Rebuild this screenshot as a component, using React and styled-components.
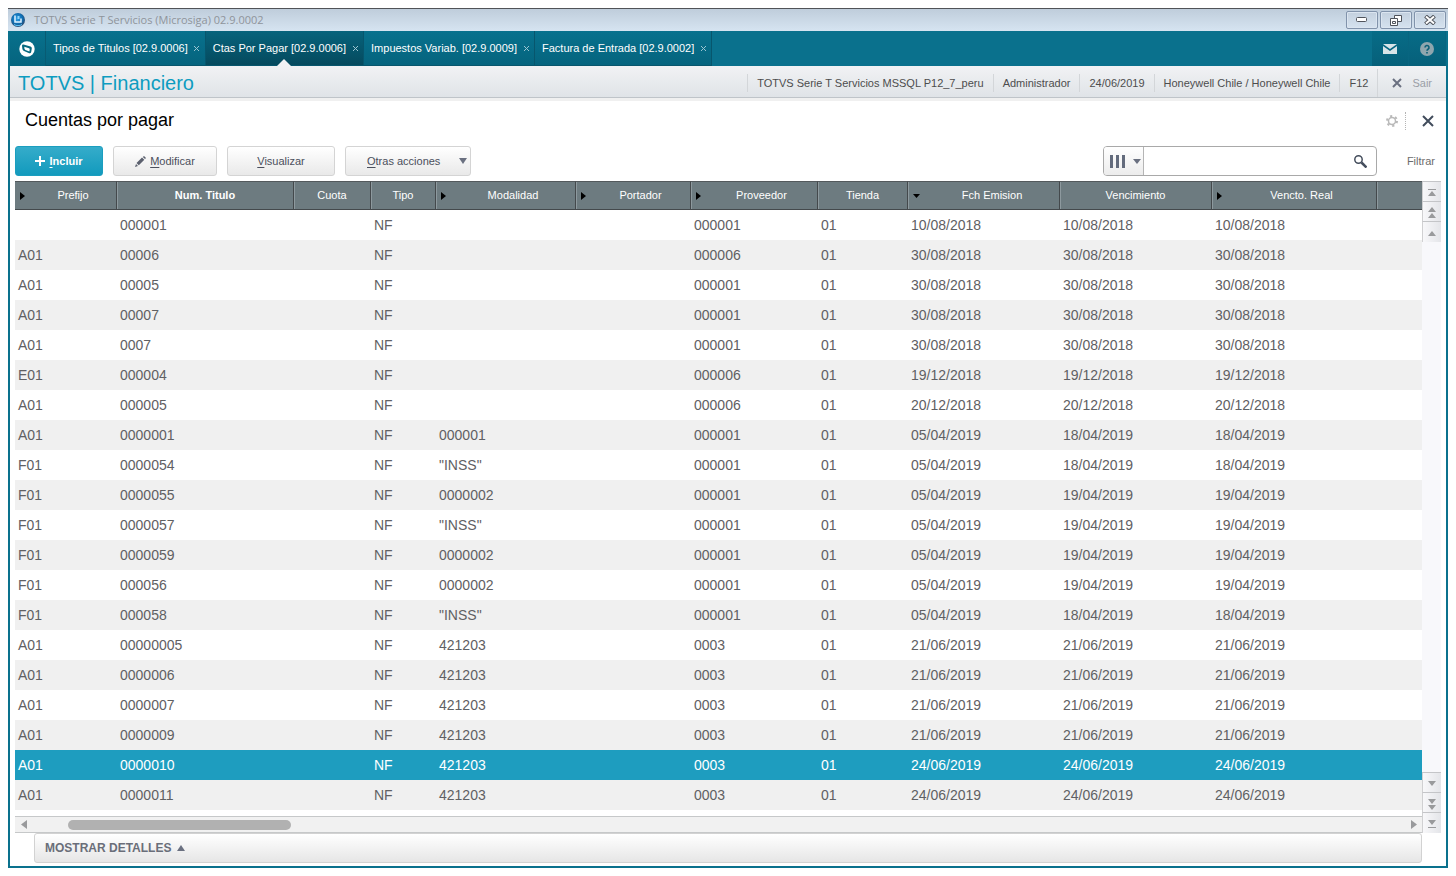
import React from 'react';
import styled, { createGlobalStyle, css } from 'styled-components';

const Global = createGlobalStyle`
  *, *::before, *::after { box-sizing: border-box; }
  body {
    margin: 8px;
    background: #fff;
    font-family: "Liberation Sans", Arial, sans-serif;
    font-size: 11px;
    color: #4d4d4d;
  }
  button, input { font: inherit; color: inherit; margin: 0; padding: 0; }
  button { cursor: pointer; background: none; border: 0; }
  svg { display: block; flex: none; }
`;

const TEAL = '#0a718d';

const Window = styled.div`
  display: flex;
  flex-direction: column;
`;

const TitleBar = styled.header`
  display: flex;
  align-items: center;
  height: 23px;
  padding: 0 2px;
  gap: 8px;
  border-top: 1px solid #505358;
  background: linear-gradient(#bfcddb, #d6e4f1);
`;

const WindowTitle = styled.span`
  flex: 1;
  font-family: "Open Sans", "Noto Sans", sans-serif;
  font-size: 11px;
  line-height: 16px;
  color: #8f949b;
`;

const WindowButtons = styled.div`
  display: flex;
  gap: 2px;
`;

const WindowButton = styled.button`
  display: flex;
  align-items: center;
  justify-content: center;
  width: 32px;
  height: 18px;
  border: 1px solid #8193ab;
  border-radius: 2px;
  background: linear-gradient(#c3d0de, #d5e2ef);
  box-shadow: inset 0 0 0 1px #dbe5f0;
`;

const Frame = styled.div`
  border: solid ${TEAL};
  border-width: 0 2px 2px;
`;

const TabBar = styled.nav`
  display: flex;
  height: 35px;
  background: ${TEAL};
`;

const HomeButton = styled.button`
  display: flex;
  align-items: center;
  justify-content: center;
  width: 36px;
  padding-right: 1px;
  border-right: 1px solid #085b73;
  background: linear-gradient(#08718d, #05647e);
`;

const Tab = styled.div`
  position: relative;
  display: flex;
  align-items: center;
  gap: 5px;
  padding: 0 4px 0 7px;
  border-right: 1px solid #07566d;
  border-bottom: 1px solid #07566d;
  background: linear-gradient(#08718d, #05647e);
  ${(p) => p.$active && css`
    background: linear-gradient(#07637c, #054a5e);
    &::after {
      content: '';
      position: absolute;
      left: 50%;
      bottom: -1px;
      margin-left: -7px;
      border: 7px solid transparent;
      border-top: 0;
      border-bottom-color: #f1f2f4;
    }
  `}
`;

const TabLabel = styled.button`
  height: 34px;
  color: #fff;
  white-space: nowrap;
`;

const TabClose = styled.button`
  display: flex;
  align-items: center;
  height: 34px;
  width: 8px;
  justify-content: center;
`;

const TabIcons = styled.div`
  display: flex;
  margin-left: auto;
`;

const TabIcon = styled.button`
  display: flex;
  align-items: center;
  justify-content: center;
  width: 37px;
  border-right: 1px solid #086580;
  background: linear-gradient(#076c87, #06607a);
`;

const InfoBar = styled.div`
  display: flex;
  align-items: center;
  height: 35px;
  padding-top: 2px;
  border-bottom: 3px solid #f0f0f0;
  background: linear-gradient(#f1f2f4, #dfe3e7);
  box-shadow: inset 0 -1px #bfc4c9;
`;

const Brand = styled.h1`
  flex: 1;
  margin: 0;
  padding-left: 8px;
  font-size: 20px;
  line-height: 24px;
  font-weight: normal;
  color: #0d9cc0;
`;

const InfoItem = styled.span`
  padding: 0 9px;
  border-left: 1px solid #d3d6d9;
  line-height: 18px;
  white-space: nowrap;
`;

const ExitButton = styled.button`
  display: flex;
  align-items: center;
  gap: 10px;
  height: 28px;
  padding: 0 14px;
  border-left: 1px solid #d3d6d9;
  color: #9a9ea6;
`;

const Content = styled.main`
  padding: 0 5px 3px;
`;

const PageHead = styled.div`
  display: flex;
  align-items: center;
  height: 45px;
  padding: 0 7px 6px 10px;
`;

const PageTitle = styled.h2`
  flex: 1;
  margin: 0;
  padding-bottom: 2px;
  font-size: 18px;
  line-height: 24px;
  font-weight: normal;
  color: #000;
`;

const GearButton = styled.button`
  height: 18px;
  padding-right: 7px;
  border-right: 1px dotted #b5b5b5;
`;

const CloseButton = styled.button`
  display: flex;
  align-items: center;
  height: 18px;
  padding-left: 16px;
`;

const Toolbar = styled.div`
  display: flex;
  align-items: center;
  gap: 10px;
  padding-bottom: 5px;
`;

const ActionButton = styled.button`
  display: flex;
  align-items: center;
  justify-content: ${(p) => (p.$menu ? 'space-between' : 'center')};
  gap: 4px;
  width: ${(p) => p.$width}px;
  height: 30px;
  padding: ${(p) => (p.$menu ? '0 3px 0 21px' : '0')};
  border: 1px solid #d4d4d4;
  border-radius: 3px;
  background: linear-gradient(#fff, #e9e9e9);
  color: #4b4f5c;
  ${(p) => p.$primary && css`
    border-color: #1b9ebf;
    background: linear-gradient(#35acca, #129abd);
    color: #fff;
    font-weight: bold;
  `}
  u { text-underline-offset: 2px; }
`;

const SearchBox = styled.form`
  display: flex;
  width: 274px;
  height: 30px;
  margin-left: auto;
  border: 1px solid #a9a9a9;
  border-radius: 4px;
  overflow: hidden;
`;

const ColumnPicker = styled.button`
  display: flex;
  align-items: center;
  gap: 7px;
  padding: 0 2px 0 6px;
  border-right: 1px solid #b5b5b5;
  background: linear-gradient(#fff, #ececec);
`;

const SearchInput = styled.input`
  flex: 1;
  min-width: 0;
  padding: 0 6px;
  border: 0;
  outline: 0;
`;

const SearchButton = styled.button`
  width: 30px;
  padding-left: 8px;
`;

const FilterButton = styled.button`
  padding: 0 6px 0 20px;
  color: #6c6c6c;
`;

const GridArea = styled.section`
  display: flex;
  height: 652px;
`;

const GridMain = styled.div`
  flex: 1;
  min-width: 0;
  display: flex;
  flex-direction: column;
  justify-content: space-between;
`;

const Table = styled.table`
  width: 100%;
  table-layout: fixed;
  border-collapse: separate;
  border-spacing: 0;
`;

const HeadCell = styled.th`
  height: 29px;
  padding: 0 0 2px;
  border-top: 1px solid #53595c;
  border-right: 1px solid #44494c;
  border-bottom: 1px solid #44494c;
  background: #6d7b80;
  box-shadow: inset 1px 0 #8d999e;
  color: #fff;
  font-weight: ${(p) => (p.$bold ? 'bold' : 'normal')};
  &:first-child { box-shadow: none; }
  &:last-child { border-right: 0; }
`;

const HeadLabel = styled.div`
  display: flex;
  align-items: center;
  padding-left: ${(p) => (p.$marked ? 5 : 0)}px;
  svg { margin: 2px 5px 0 0; }
  span { flex: 1; text-align: center; }
`;

const Row = styled.tr`
  background: #fff;
  color: #5f6063;
  &:nth-child(even) { background: #f0f0f0; }
  ${(p) => p.$selected && css`
    &&& { background: #1e9dbf; color: #fff; }
  `}
`;

const Cell = styled.td`
  height: 30px;
  padding: 0 3px;
  font-size: 14px;
  line-height: 18px;
  white-space: nowrap;
`;

const HScroll = styled.div`
  display: flex;
  align-items: center;
  height: 17px;
  border-top: 1px solid #c6c8c9;
  border-bottom: 1px solid #c6c8c9;
  background: #f1f1f1;
`;

const HArrow = styled.button`
  display: flex;
  align-items: center;
  justify-content: center;
  width: 17px;
  height: 15px;
`;

const HTrack = styled.div`
  flex: 1;
  padding-left: 36px;
`;

const HThumb = styled.div`
  width: 223px;
  height: 10px;
  border-radius: 5px;
  background: #b1b1b1;
`;

const VScroll = styled.div`
  display: flex;
  flex-direction: column;
  justify-content: space-between;
  width: 19px;
  background: #f8f8fb;
`;

const VButtons = styled.div`
  border-top: 1px solid #c4c5c8;
`;

const VButton = styled.button`
  display: flex;
  align-items: center;
  justify-content: center;
  width: 19px;
  height: 20px;
  padding-top: 2px;
  border-left: 1px solid #d0d0d2;
  border-bottom: 1px solid #c4c5c8;
  background: linear-gradient(90deg, #f8f8fa, #e4e5e9);
  &:last-child { border-bottom: 0; }
`;

const Details = styled.button`
  display: flex;
  align-items: center;
  gap: 6px;
  width: calc(100% - 38px);
  height: 30px;
  margin-left: 19px;
  padding: 0 10px;
  border: 1px solid #d2d2d2;
  border-radius: 3px;
  background: linear-gradient(#fff, #e6e6e6);
  font-size: 12px;
  font-weight: bold;
  color: #6a6e79;
`;

const Triangle = ({ dir = 'down', w = 8, h = 5, color = '#6a7080' }) => {
  const pts = {
    down: `0,0 ${w},0 ${w / 2},${h}`,
    up: `0,${h} ${w},${h} ${w / 2},0`,
    right: `0,0 ${w},${h / 2} 0,${h}`,
    left: `${w},0 0,${h / 2} ${w},${h}`,
  }[dir];
  return (
    <svg width={w} height={h} viewBox={`0 0 ${w} ${h}`}>
      <polygon points={pts} fill={color} />
    </svg>
  );
};

const Cross = ({ size, stroke, color }) => (
  <svg width={size} height={size} viewBox={`0 0 ${size} ${size}`}>
    <path d={`M1 1L${size - 1} ${size - 1}M${size - 1} 1L1 ${size - 1}`} stroke={color} strokeWidth={stroke} />
  </svg>
);

const GREY = '#999a9c';
const ScrollGlyph = ({ kind }) => (
  <svg width="9" height="12" viewBox="0 0 9 12" fill={GREY}>
    {kind === 'first' && <path d="M0 2h8v1H0zM0 9h8L4 4z" />}
    {kind === 'pageUp' && <path d="M0 5h8L4 0zM0 11h8L4 6z" />}
    {kind === 'up' && <path d="M0 9h8L4 4z" />}
    {kind === 'down' && <path d="M0 3h8L4 8z" />}
    {kind === 'pageDown' && <path d="M0 1h8L4 6zM0 7h8L4 12z" />}
    {kind === 'last' && <path d="M0 2h8L4 7zM0 9h8v1H0z" />}
  </svg>
);

const AppLogo = () => (
  <svg width="16" height="16" viewBox="0 0 16 16">
    <defs>
      <radialGradient id="ball" cx="45%" cy="40%" r="60%">
        <stop offset="0" stopColor="#2f9fe4" />
        <stop offset="0.6" stopColor="#0f6fb4" />
        <stop offset="1" stopColor="#2c4a70" />
      </radialGradient>
    </defs>
    <circle cx="8" cy="8" r="7" fill="url(#ball)" />
    <path d="M5 3.500v6.500h6V6.500" fill="none" stroke="#dff2ff" strokeWidth="1.500" />
    <path d="M7.500 4h2v3h-2z" fill="#8fd4fa" />
    <path d="M4 12.500c2.500 1.500 5.500 1.500 8 0" fill="none" stroke="#5cc3f5" />
  </svg>
);

const columns = [
  { label: 'Prefijo', width: 102, mark: 'right' },
  { label: 'Num. Titulo', width: 177, bold: true },
  { label: 'Cuota', width: 77 },
  { label: 'Tipo', width: 65 },
  { label: 'Modalidad', width: 140, mark: 'right' },
  { label: 'Portador', width: 115, mark: 'right' },
  { label: 'Proveedor', width: 127, mark: 'right' },
  { label: 'Tienda', width: 90 },
  { label: 'Fch Emision', width: 152, mark: 'down' },
  { label: 'Vencimiento', width: 152 },
  { label: 'Vencto. Real', width: 165, mark: 'right' },
  { label: '' },
];

const titles = [
  ['', '000001', '', '000001', '10/08/2018', '10/08/2018'],
  ['A01', '00006', '', '000006', '30/08/2018', '30/08/2018'],
  ['A01', '00005', '', '000001', '30/08/2018', '30/08/2018'],
  ['A01', '00007', '', '000001', '30/08/2018', '30/08/2018'],
  ['A01', '0007', '', '000001', '30/08/2018', '30/08/2018'],
  ['E01', '000004', '', '000006', '19/12/2018', '19/12/2018'],
  ['A01', '000005', '', '000006', '20/12/2018', '20/12/2018'],
  ['A01', '0000001', '000001', '000001', '05/04/2019', '18/04/2019'],
  ['F01', '0000054', '"INSS"', '000001', '05/04/2019', '18/04/2019'],
  ['F01', '0000055', '0000002', '000001', '05/04/2019', '19/04/2019'],
  ['F01', '0000057', '"INSS"', '000001', '05/04/2019', '19/04/2019'],
  ['F01', '0000059', '0000002', '000001', '05/04/2019', '19/04/2019'],
  ['F01', '000056', '0000002', '000001', '05/04/2019', '19/04/2019'],
  ['F01', '000058', '"INSS"', '000001', '05/04/2019', '18/04/2019'],
  ['A01', '00000005', '421203', '0003', '21/06/2019', '21/06/2019'],
  ['A01', '0000006', '421203', '0003', '21/06/2019', '21/06/2019'],
  ['A01', '0000007', '421203', '0003', '21/06/2019', '21/06/2019'],
  ['A01', '0000009', '421203', '0003', '21/06/2019', '21/06/2019'],
  ['A01', '0000010', '421203', '0003', '24/06/2019', '24/06/2019'],
  ['A01', '0000011', '421203', '0003', '24/06/2019', '24/06/2019'],
];

const selectedTitle = '0000010';

const tabs = [
  'Tipos de Titulos [02.9.0006]',
  'Ctas Por Pagar [02.9.0006]',
  'Impuestos Variab. [02.9.0009]',
  'Factura de Entrada [02.9.0002]',
];

const session = [
  'TOTVS Serie T Servicios MSSQL P12_7_peru',
  'Administrador',
  '24/06/2019',
  'Honeywell Chile / Honeywell Chile',
  'F12',
];

export default function App() {
  return (
    <Window>
      <Global />
      <TitleBar>
        <AppLogo />
        <WindowTitle>TOTVS Serie T Servicios (Microsiga) 02.9.0002</WindowTitle>
        <WindowButtons>
          <WindowButton aria-label="Minimizar">
            <svg width="12" height="6" viewBox="0 0 12 6">
              <rect x="0.5" y="0.5" width="10" height="4" rx="1" fill="#fff" stroke="#50545c" />
            </svg>
          </WindowButton>
          <WindowButton aria-label="Restaurar">
            <svg width="12" height="11" viewBox="0 0 12 11" fill="#fff" stroke="#50545c">
              <path d="M4.500 0.500h7v6h-7z" />
              <path d="M0.500 3.500h7v7h-7z" />
              <path d="M2.500 6.500h3v2h-3z" />
            </svg>
          </WindowButton>
          <WindowButton aria-label="Cerrar">
            <svg width="12" height="10" viewBox="0 0 12 10">
              <path d="M1.500 1L10.500 9M10.500 1L1.500 9" stroke="#50545c" strokeWidth="4" />
              <path d="M2 1.500L10 8.500M10 1.500L2 8.500" stroke="#fff" strokeWidth="2" />
            </svg>
          </WindowButton>
        </WindowButtons>
      </TitleBar>
      <Frame>
        <TabBar>
          <HomeButton aria-label="Inicio">
            <svg width="16" height="16" viewBox="0 0 16 16">
              <circle cx="8" cy="8" r="7.700" fill="#fff" />
              <path
                d="M4.500 3.500L11.500 5.500Q13 6 12.800 7.500L12.200 11Q11.800 12.800 10.200 12.200L5 10Q3.400 9.200 3.300 7.500L3 4.800Q3 3.200 4.500 3.500z"
                fill="#07697f"
              />
              <path d="M5.300 5.700L10 7.300Q10.800 7.600 10.700 8.400L10.400 10.400L6.400 8.900Q5.500 8.400 5.400 7.500z" fill="#fff" />
            </svg>
          </HomeButton>
          {tabs.map((t, i) => (
            <Tab key={t} $active={i === 1}>
              <TabLabel>{t}</TabLabel>
              <TabClose aria-label={`Cerrar ${t}`}>
                <Cross size={7} stroke={1} color="#9cc5d1" />
              </TabClose>
            </Tab>
          ))}
          <TabIcons>
            <TabIcon aria-label="Mensajes">
              <svg width="14" height="10" viewBox="0 0 14 10" fill="#d9e4e8">
                <path d="M0 0h14L7 5z" />
                <path d="M0 2l7 5 7-5v8H0z" />
              </svg>
            </TabIcon>
            <TabIcon aria-label="Ayuda">
              <svg width="14" height="14" viewBox="0 0 14 14">
                <circle cx="7" cy="7" r="7" fill="#8fa6ae" />
                <path d="M5 5.500a2 2 0 1 1 3 1.700c-.8.500-1 .8-1 1.600M7 10v1.500" fill="none" stroke="#0a5f77" strokeWidth="1.600" />
              </svg>
            </TabIcon>
          </TabIcons>
        </TabBar>
        <InfoBar>
          <Brand>TOTVS | Financiero</Brand>
          {session.map((s) => (
            <InfoItem key={s}>{s}</InfoItem>
          ))}
          <ExitButton>
            <Cross size={10} stroke={2} color="#6a7080" />
            Sair
          </ExitButton>
        </InfoBar>
        <Content>
          <PageHead>
            <PageTitle>Cuentas por pagar</PageTitle>
            <GearButton aria-label="Configurar">
              <svg width="12" height="12" viewBox="0 0 12 12" fill="none" stroke="#b9b9b9">
                <circle cx="6" cy="6" r="3.500" strokeWidth="1.500" />
                <circle cx="6" cy="6" r="5" strokeWidth="2" strokeDasharray="2.200 3.036" />
              </svg>
            </GearButton>
            <CloseButton aria-label="Cerrar">
              <Cross size={12} stroke={2} color="#414c5c" />
            </CloseButton>
          </PageHead>
          <Toolbar>
            <ActionButton $width={88} $primary>
              <svg width="10" height="10" viewBox="0 0 10 10">
                <path d="M5 0v10M0 5h10" stroke="#fff" strokeWidth="2" />
              </svg>
              <span><u>I</u>ncluir</span>
            </ActionButton>
            <ActionButton $width={104}>
              <svg width="11" height="11" viewBox="0 0 11 11" fill="#5b606e">
                <path d="M0 11l1-3 2 2zM1.500 7L7 1.500 9.300 3.800 3.800 9.300zM7.800 1L9 0l2 2-1 1z" />
              </svg>
              <span><u>M</u>odificar</span>
            </ActionButton>
            <ActionButton $width={108}>
              <span><u>V</u>isualizar</span>
            </ActionButton>
            <ActionButton $width={126} $menu>
              <span><u>O</u>tras acciones</span>
              <Triangle w={8} h={6} />
            </ActionButton>
            <SearchBox>
              <ColumnPicker type="button" aria-label="Columnas">
                <svg width="16" height="13" viewBox="0 0 16 13" fill="#636b7c">
                  <path d="M0 0h3v13H0zM6 0h3v13H6zM12 0h3v13h-3z" />
                </svg>
                <Triangle w={8} h={5} />
              </ColumnPicker>
              <SearchInput type="text" aria-label="Buscar" />
              <SearchButton type="submit" aria-label="Buscar">
                <svg width="13" height="13" viewBox="0 0 13 13" fill="none" stroke="#454e5d">
                  <circle cx="4.500" cy="4.500" r="3.700" strokeWidth="1.500" />
                  <path d="M7.500 7.500l5 5" strokeWidth="2.500" />
                </svg>
              </SearchButton>
            </SearchBox>
            <FilterButton>Filtrar</FilterButton>
          </Toolbar>
          <GridArea>
            <GridMain>
              <Table>
                <colgroup>
                  {columns.map((c) => (
                    <col key={c.label} width={c.width} />
                  ))}
                </colgroup>
                <thead>
                  <tr>
                    {columns.map((c) => (
                      <HeadCell key={c.label} $bold={c.bold}>
                        <HeadLabel $marked={c.mark}>
                          {c.mark === 'right' && <Triangle dir="right" w={5} h={8} color="#000" />}
                          {c.mark === 'down' && <Triangle dir="down" w={7} h={4} color="#000" />}
                          <span>{c.label}</span>
                        </HeadLabel>
                      </HeadCell>
                    ))}
                  </tr>
                </thead>
                <tbody>
                  {titles.map(([prefix, num, mode, supplier, issued, due]) => (
                    <Row key={num} $selected={num === selectedTitle}>
                      <Cell>{prefix}</Cell>
                      <Cell>{num}</Cell>
                      <Cell />
                      <Cell>NF</Cell>
                      <Cell>{mode}</Cell>
                      <Cell />
                      <Cell>{supplier}</Cell>
                      <Cell>01</Cell>
                      <Cell>{issued}</Cell>
                      <Cell>{due}</Cell>
                      <Cell>{due}</Cell>
                      <Cell />
                    </Row>
                  ))}
                </tbody>
              </Table>
              <HScroll>
                <HArrow aria-label="Izquierda"><Triangle dir="left" w={6} h={9} color={GREY} /></HArrow>
                <HTrack><HThumb /></HTrack>
                <HArrow aria-label="Derecha"><Triangle dir="right" w={6} h={9} color={GREY} /></HArrow>
              </HScroll>
            </GridMain>
            <VScroll>
              <VButtons>
                <VButton aria-label="Primero"><ScrollGlyph kind="first" /></VButton>
                <VButton aria-label="Página anterior"><ScrollGlyph kind="pageUp" /></VButton>
                <VButton aria-label="Arriba"><ScrollGlyph kind="up" /></VButton>
              </VButtons>
              <VButtons>
                <VButton aria-label="Abajo"><ScrollGlyph kind="down" /></VButton>
                <VButton aria-label="Página siguiente"><ScrollGlyph kind="pageDown" /></VButton>
                <VButton aria-label="Último"><ScrollGlyph kind="last" /></VButton>
              </VButtons>
            </VScroll>
          </GridArea>
          <Details>
            MOSTRAR DETALLES
            <Triangle dir="up" w={8} h={6} />
          </Details>
        </Content>
      </Frame>
    </Window>
  );
}
